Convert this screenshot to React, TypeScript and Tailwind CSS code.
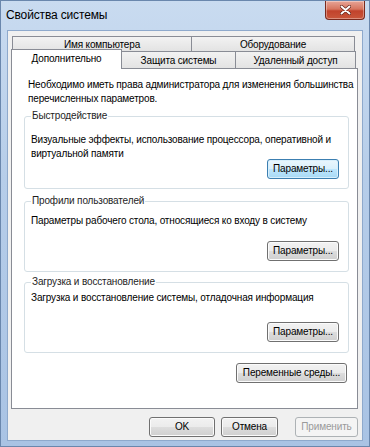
import React from 'react';
import clsx from 'clsx';

type BtnProps = {
  children: React.ReactNode;
  className?: string;
  focused?: boolean;
  disabled?: boolean;
};

function Btn({ children, className, focused, disabled }: BtnProps) {
  return (
    <button
      className={clsx(
        'h-[20px] rounded-[3px] border text-[10px] tracking-[-0.15px] leading-none flex items-center justify-center',
        focused &&
          'border-[#3c7fb1] bg-[linear-gradient(to_bottom,#eaf6fd_0%,#d9f0fc_50%,#bee6fd_51%,#a7d9f5_100%)] shadow-[inset_0_0_0_1px_#d8effc] text-black',
        disabled && 'border-[#adb2b5] bg-[#f4f4f4] text-[#9a9a9a]',
        !focused &&
          !disabled &&
          'border-[#707070] bg-[linear-gradient(to_bottom,#f2f2f2_0%,#ebebeb_50%,#dddddd_51%,#cfcfcf_100%)] shadow-[inset_0_0_0_1px_#fbfbfb] text-black',
        className
      )}
    >
      {children}
    </button>
  );
}

function Tab({ label, className }: { label: string; className?: string }) {
  return (
    <div
      className={clsx(
        'flex items-center justify-center border border-[#898c95] border-b-0 bg-[linear-gradient(to_bottom,#f2f2f2,#e3e3e3)] text-[10px] text-black',
        className
      )}
    >
      {label}
    </div>
  );
}

type GroupProps = {
  title: string;
  children: React.ReactNode;
  className?: string;
};

function Group({ title, children, className }: GroupProps) {
  return (
    <fieldset className={clsx('border border-[#d5dfe5] rounded-[3px] px-[6px]', className)}>
      <legend className="px-[1px] text-[10px] leading-[14px] text-[#1e1e1e]">{title}</legend>
      {children}
    </fieldset>
  );
}

export default function App() {
  return (
    <div className="w-[370px] h-[447px] flex flex-col bg-[linear-gradient(to_bottom,#c9dbf0,#b6cde9_40%,#a9c3e4)] border border-[#6a87ad] font-['Liberation_Sans',Arial,sans-serif] tracking-[-0.15px] text-black overflow-hidden">
      {/* Title bar */}
      <div className="h-[29px] flex items-start justify-between pl-[5px]">
        <span className="mt-[5px] text-[12px] text-black">Свойства системы</span>
        <div className="mr-[4px] w-[40px] h-[19px] rounded-b-[4px] border border-t-0 border-[#7a2a1e] bg-[linear-gradient(to_bottom,#e7a597,#d7755f_45%,#c1432c_55%,#c9563b)] flex items-center justify-center shadow-[inset_0_0_0_1px_rgba(255,255,255,0.35)]">
          <svg width="11" height="10" viewBox="0 0 11 10">
            <path d="M1.5 1.5 L9.5 8.5 M9.5 1.5 L1.5 8.5" stroke="#5a1a10" strokeWidth="3.2" strokeLinecap="round" />
            <path d="M1.5 1.5 L9.5 8.5 M9.5 1.5 L1.5 8.5" stroke="#ffffff" strokeWidth="2" strokeLinecap="round" />
          </svg>
        </div>
      </div>

      {/* Client area */}
      <div className="flex-1 mx-[6px] mb-[5px] border border-[#8ea9cc] bg-[#f0f0f0] flex flex-col pl-[3px] pr-[4px] pt-[5px]">
        {/* Tabs, back row */}
        <div className="flex ml-[1px] h-[15px]">
          <Tab label="Имя компьютера" className="w-[180px]" />
          <Tab label="Оборудование" className="w-[163px] border-l-0" />
        </div>
        {/* Tabs, front row */}
        <div className="flex items-end h-[17px] relative z-10">
          <div className="w-[111px] h-[20px] -mt-[3px] -mb-px border border-[#898c95] border-b-0 bg-white flex items-center justify-center text-[10px] pb-[2px]">
            Дополнительно
          </div>
          <Tab label="Защита системы" className="w-[114px] h-[17px] border-l-0" />
          <Tab label="Удаленный доступ" className="w-[120px] h-[17px] border-l-0" />
        </div>

        {/* Tab panel */}
        <div className="h-[341px] border border-[#898c95] bg-white pl-[12px] pr-[8px] flex flex-col">
          <p className="mt-[9px] pl-[4px] -mr-[6px] text-[10px] leading-[14px]">
            Необходимо иметь права администратора для изменения большинства перечисленных параметров.
          </p>

          <Group title="Быстродействие" className="mt-[3px] pb-[9px]">
            <p className="mt-[10px] text-[10px] leading-[14px]">
              Визуальные эффекты, использование процессора, оперативной и виртуальной памяти
            </p>
            <div className="flex justify-end -mt-[2px] mr-[3px]">
              <Btn focused className="w-[72px]">
                Параметры...
              </Btn>
            </div>
          </Group>

          <Group title="Профили пользователей" className="mt-[5px] pb-[10px]">
            <p className="mt-[6px] text-[10px] leading-[14px]">
              Параметры рабочего стола, относящиеся ко входу в систему
            </p>
            <div className="flex justify-end mt-[13px] mr-[3px]">
              <Btn className="w-[72px]">Параметры...</Btn>
            </div>
          </Group>

          <Group title="Загрузка и восстановление" className="mt-[3px] pb-[10px]">
            <p className="mt-[2px] text-[10px] leading-[14px]">
              Загрузка и восстановление системы, отладочная информация
            </p>
            <div className="flex justify-end mt-[17px] mr-[3px]">
              <Btn className="w-[72px]">Параметры...</Btn>
            </div>
          </Group>

          <div className="flex justify-end mt-[10px] mr-[2px]">
            <Btn className="w-[111px]">Переменные среды...</Btn>
          </div>
        </div>

        {/* Dialog buttons */}
        <div className="flex justify-end mt-[8px] gap-[6px]">
          <Btn className="w-[66px] h-[19px]">OK</Btn>
          <Btn className="w-[57px] h-[19px] mr-[11px]">Отмена</Btn>
          <Btn disabled className="w-[63px] h-[19px]">
            Применить
          </Btn>
        </div>
      </div>
    </div>
  );
}
